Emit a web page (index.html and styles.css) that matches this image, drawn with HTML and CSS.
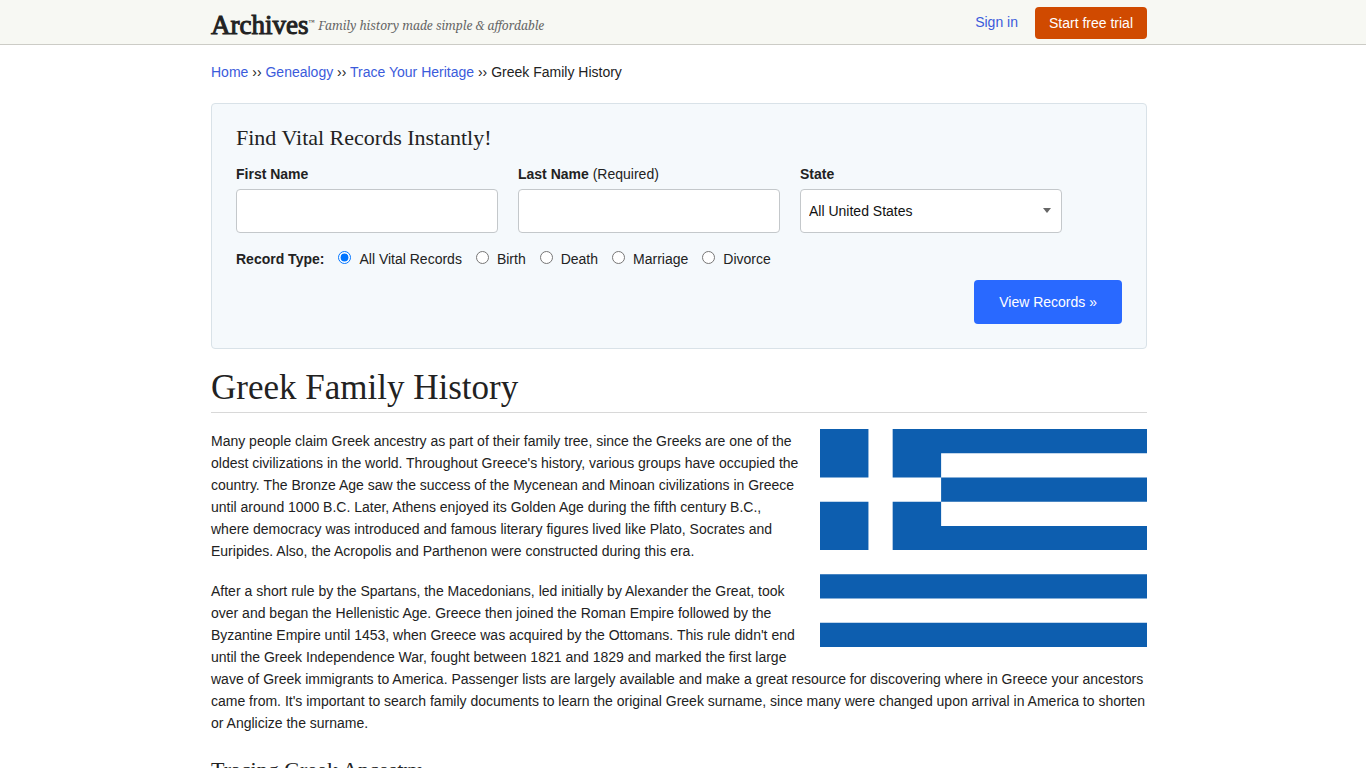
FILE: index.html
```html
<!DOCTYPE html>
<html lang="en">
<head>
    <meta charset="UTF-8">
    <meta name="viewport" content="width=device-width, initial-scale=1.0">
    <title>Greek Family History</title>
    <link rel="stylesheet" href="styles.css">
</head>
<body>
    <header class="site-header">
        <div class="wrap header-inner">
            <a class="brand" href="#">
                <span class="logo">Archives<span class="tm">™</span></span>
                <span class="tagline">Family history made simple &amp; affordable</span>
            </a>
            <nav class="account">
                <a href="#">Sign in</a>
                <button type="button" class="btn btn-trial">Start free trial</button>
            </nav>
        </div>
    </header>

    <main class="wrap">
        <nav class="breadcrumbs">
            <a href="#">Home</a> ›› <a href="#">Genealogy</a> ›› <a href="#">Trace Your Heritage</a> ›› Greek Family History
        </nav>

        <form class="search">
            <h3>Find Vital Records Instantly!</h3>
            <div class="fields">
                <div class="field">
                    <label for="first-name">First Name</label>
                    <input type="text" id="first-name" name="firstName">
                </div>
                <div class="field">
                    <label for="last-name">Last Name <span class="note">(Required)</span></label>
                    <input type="text" id="last-name" name="lastName">
                </div>
                <div class="field">
                    <label for="state">State</label>
                    <div class="select-box">
                        <select id="state" name="state">
                            <option>All United States</option>
                        </select>
                        <svg class="arrow" viewBox="0 0 8 5" aria-hidden="true"><path d="M0 0h8L4 5z"/></svg>
                    </div>
                </div>
            </div>
            <div class="types">
                <strong>Record Type:</strong>
                <label><input type="radio" name="type" checked>All Vital Records</label>
                <label><input type="radio" name="type">Birth</label>
                <label><input type="radio" name="type">Death</label>
                <label><input type="radio" name="type">Marriage</label>
                <label><input type="radio" name="type">Divorce</label>
            </div>
            <button type="submit" class="btn btn-search">View Records »</button>
        </form>

        <article>
            <h1>Greek Family History</h1>
            <!-- flag of Greece -->
            <svg class="flag" viewBox="0 0 27 18" role="img" aria-label="Greek flag">
                <path fill="#0d5eaf" d="M0 0h4v4H0zM6 0h21v2H10v2H6zM10 4h17v2H10zM0 6h4v4H0zM6 6h4v2h17v2H6zM0 12h27v2H0zM0 16h27v2H0z"/>
            </svg>
            <p>Many people claim Greek ancestry as part of their family tree, since the Greeks are one of the oldest civilizations in the world. Throughout Greece's history, various groups have occupied the country. The Bronze Age saw the success of the Mycenean and Minoan civilizations in Greece until around 1000 B.C. Later, Athens enjoyed its Golden Age during the fifth century B.C., where democracy was introduced and famous literary figures lived like Plato, Socrates and Euripides. Also, the Acropolis and Parthenon were constructed during this era.</p>
            <p>After a short rule by the Spartans, the Macedonians, led initially by Alexander the Great, took over and began the Hellenistic Age. Greece then joined the Roman Empire followed by the Byzantine Empire until 1453, when Greece was acquired by the Ottomans. This rule didn't end until the Greek Independence War, fought between 1821 and 1829 and marked the first large wave of Greek immigrants to America. Passenger lists are largely available and make a great resource for discovering where in Greece your ancestors came from. It's important to search family documents to learn the original Greek surname, since many were changed upon arrival in America to shorten or Anglicize the surname.</p>
            <h2>Tracing Greek Ancestry</h2>
        </article>
    </main>
</body>
</html>
```

FILE: styles.css
```css
* {
    box-sizing: border-box;
}
body {
    margin: 0;
    font-family: Arial, "Liberation Sans", sans-serif;
    font-size: 14px;
    line-height: 22px;
    color: #222;
    background: #fff;
}
a {
    color: #3b5bdb;
    text-decoration: none;
}
h1, h2, h3 {
    font-family: Georgia, "Liberation Serif", serif;
    font-weight: normal;
    margin: 0;
}
.wrap {
    max-width: 944px;
    margin: 0 auto;
    padding-right: 8px;
}

/* header */
.site-header {
    background: #f7f8f3;
    border-bottom: 1px solid #ccccc6;
}
.header-inner {
    display: flex;
    justify-content: space-between;
    align-items: center;
    height: 44px;
}
.brand {
    display: flex;
    align-items: baseline;
    gap: 4px;
    color: #222;
    padding-top: 2px;
}
.logo {
    font-family: "Liberation Serif", serif;
    font-size: 27px;
    line-height: 32px;
    -webkit-text-stroke: 1px #222;
}
.tm {
    font-size: 6px;
    vertical-align: 10px;
    -webkit-text-stroke: 0;
}
.tagline {
    font-family: "Noto Serif", "Liberation Serif", serif;
    font-size: 12px;
    font-style: italic;
    color: #666;
    padding-bottom: 4px;
    align-self: flex-end;
}
.account {
    display: flex;
    align-items: center;
    gap: 17px;
}
.btn {
    font-family: inherit;
    font-size: 14px;
    color: #fff;
    border: none;
    border-radius: 4px;
    cursor: pointer;
}
.btn-trial {
    height: 32px;
    padding: 0 14px;
    margin-top: 2px;
    background: #d04a00;
}

.breadcrumbs {
    padding: 16px 0 20px;
}

/* search form */
.search {
    display: flex;
    flex-direction: column;
    padding: 24px;
    background: #f5f9fc;
    border: 1px solid #d9e2e8;
    border-radius: 4px;
}
.search h3 {
    font-size: 22px;
    line-height: 20px;
    margin-bottom: 15px;
}
.fields {
    display: flex;
    gap: 20px;
}
.field {
    flex: 0 1 262px;
}
.field label {
    display: block;
    font-weight: bold;
    margin-bottom: 4px;
}
.field .note {
    font-weight: normal;
}
.field input,
.field select {
    display: block;
    width: 100%;
    height: 44px;
    padding: 0 8px;
    font-family: inherit;
    font-size: 14px;
    color: #111;
    background: #fff;
    border: 1px solid #c4c8cb;
    border-radius: 4px;
    appearance: none;
}
.select-box {
    position: relative;
}
.arrow {
    position: absolute;
    right: 11px;
    top: 19px;
    width: 8px;
    height: 5px;
    fill: #666;
    pointer-events: none;
}
.types {
    display: flex;
    gap: 14px;
    margin: 15px 0 10px;
}
.types input {
    margin: 0 8px 0 0;
}
.btn-search {
    align-self: flex-end;
    height: 44px;
    padding: 0 25px;
    background: #2969ff;
}

/* article */
h1 {
    font-size: 35px;
    line-height: 40px;
    margin-top: 19px;
    padding-bottom: 4px;
    border-bottom: 1px solid #d8d8d8;
}
.flag {
    float: right;
    width: 35%;
    max-width: 327px;
    margin: 16px 0 0 20px;
}
article p {
    margin: 17px 0 18px;
}
h2 {
    font-size: 22px;
    line-height: 28px;
    margin-top: 22px;
}
```
